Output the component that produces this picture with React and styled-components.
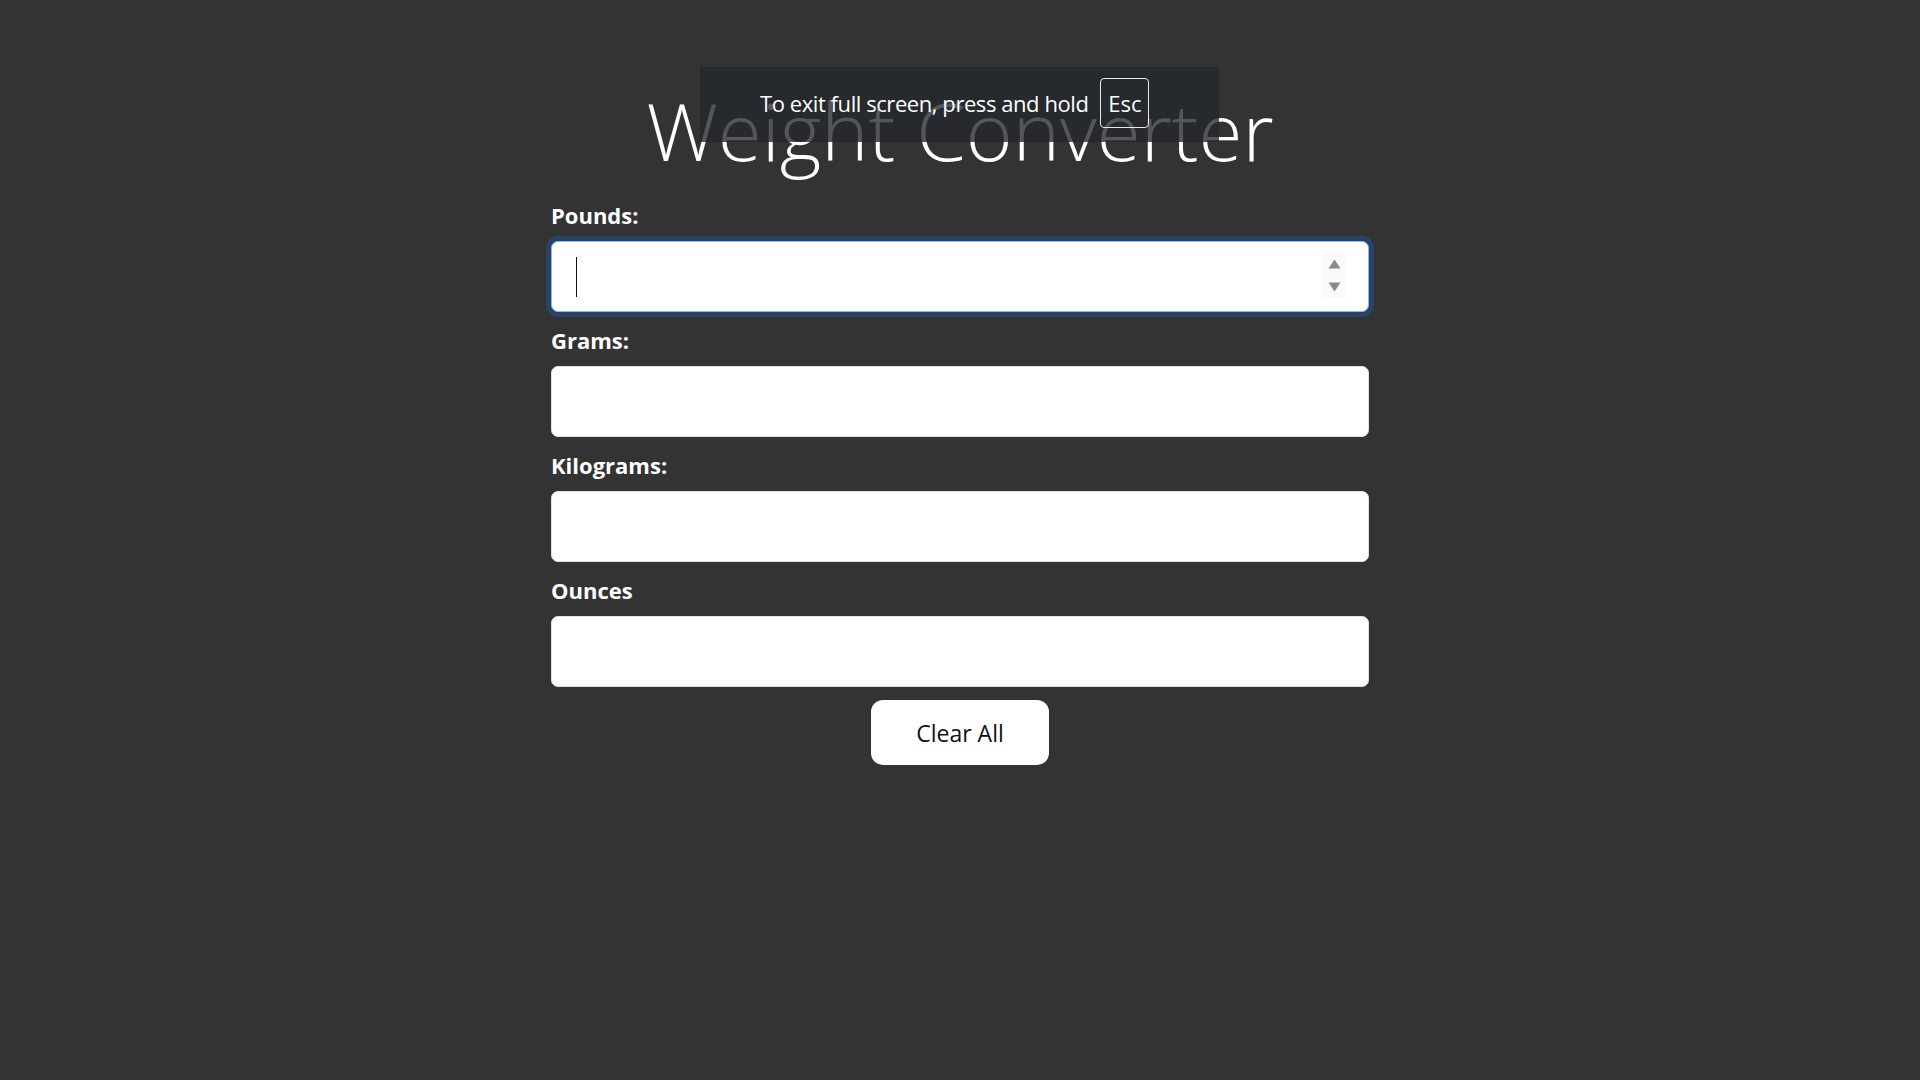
import React, { useState } from "react";
import styled, { createGlobalStyle, css } from "styled-components";

const GlobalStyle = createGlobalStyle`
  html, body {
    margin: 0;
    padding: 0;
    background: #333333;
  }
  body {
    font-family: "Open Sans", "Noto Sans", sans-serif;
    color: #ffffff;
    min-height: 100vh;
  }
`;

const Page = styled.div`
  min-height: 100vh;
  padding-top: 81px;
  box-sizing: border-box;
`;

const Container = styled.main`
  width: 818px;
  margin: 0 auto;
  display: flex;
  flex-direction: column;
`;

const Title = styled.h1`
  margin: 0 0 20px;
  text-align: center;
  font-size: 80px;
  line-height: 98px;
  font-weight: 300;
  color: #ffffff;
`;

const Field = styled.div`
  display: flex;
  flex-direction: column;
  margin-bottom: 12px;
`;

const Label = styled.label`
  font-size: 22px;
  line-height: 33px;
  font-weight: 700;
  margin-bottom: 9px;
`;

const InputWrap = styled.div`
  position: relative;
`;

const Input = styled.input`
  width: 100%;
  height: 71px;
  box-sizing: border-box;
  padding: 0 24px;
  font-family: inherit;
  font-size: 28px;
  color: #212529;
  background: #ffffff;
  border: 1px solid #dee2e6;
  border-radius: 7px;
  outline: none;
  caret-color: transparent;
  appearance: textfield;
  &::-webkit-inner-spin-button,
  &::-webkit-outer-spin-button {
    -webkit-appearance: none;
    margin: 0;
  }
  ${({ $focused }) =>
    $focused &&
    css`
      border-color: #86b7fe;
      box-shadow: 0 0 0 5px rgba(13, 110, 253, 0.25);
    `}
`;

const Caret = styled.span`
  position: absolute;
  left: 25px;
  top: 16px;
  width: 1px;
  height: 40px;
  background: #111;
`;

const Spinner = styled.div`
  position: absolute;
  right: 23px;
  top: 12px;
  width: 23px;
  height: 45px;
  background: #fafafa;
  display: flex;
  flex-direction: column;
  align-items: center;
  justify-content: center;
  gap: 13px;
`;

const Actions = styled.div`
  display: flex;
  justify-content: center;
  margin-top: 1px;
`;

const ClearButton = styled.button`
  width: 178px;
  height: 65px;
  border: none;
  border-radius: 12px;
  background: #ffffff;
  color: #111111;
  font-family: inherit;
  font-size: 23px;
  cursor: pointer;
`;

const Toast = styled.div`
  position: absolute;
  top: 67px;
  left: 700px;
  width: 519px;
  height: 75px;
  box-sizing: border-box;
  padding: 0 0 3px 60px;
  background: rgba(35, 38, 44, 0.78);
  display: flex;
  align-items: center;
  gap: 12px;
  font-size: 22px;
  letter-spacing: -0.43px;
  color: #ffffff;
`;

const Key = styled.span`
  width: 49px;
  height: 50px;
  box-sizing: border-box;
  border: 1px solid #e8e8e8;
  border-radius: 4px;
  display: flex;
  align-items: center;
  justify-content: center;
  letter-spacing: 0;
`;

const fields = [
  { id: "pounds", label: "Pounds:" },
  { id: "grams", label: "Grams:" },
  { id: "kilograms", label: "Kilograms:" },
  { id: "ounces", label: "Ounces" },
];

export default function App() {
  const [values, setValues] = useState({ pounds: "", grams: "", kilograms: "", ounces: "" });

  const update = (id, v) => setValues((prev) => ({ ...prev, [id]: v }));
  const clearAll = () => setValues({ pounds: "", grams: "", kilograms: "", ounces: "" });

  return (
    <>
      <GlobalStyle />
      <Page>
        <Container>
          <Title>Weight Converter</Title>
          {fields.map((f) => (
            <Field key={f.id}>
              <Label htmlFor={f.id}>{f.label}</Label>
              <InputWrap>
                <Input
                  id={f.id}
                  type="number"
                  $focused={f.id === "pounds"}
                  value={values[f.id]}
                  onChange={(e) => update(f.id, e.target.value)}
                />
                {f.id === "pounds" && (
                  <>
                    <Caret />
                    <Spinner>
                      <svg width="13" height="10" viewBox="0 0 13 10">
                        <path d="M6.5 0.5 L12.5 9.5 L0.5 9.5 Z" fill="#8a8a8a" />
                      </svg>
                      <svg width="13" height="10" viewBox="0 0 13 10">
                        <path d="M0.5 0.5 L12.5 0.5 L6.5 9.5 Z" fill="#8a8a8a" />
                      </svg>
                    </Spinner>
                  </>
                )}
              </InputWrap>
            </Field>
          ))}
          <Actions>
            <ClearButton onClick={clearAll}>Clear All</ClearButton>
          </Actions>
        </Container>
        <Toast>
          <span>To exit full screen, press and hold</span>
          <Key>Esc</Key>
        </Toast>
      </Page>
    </>
  );
}
